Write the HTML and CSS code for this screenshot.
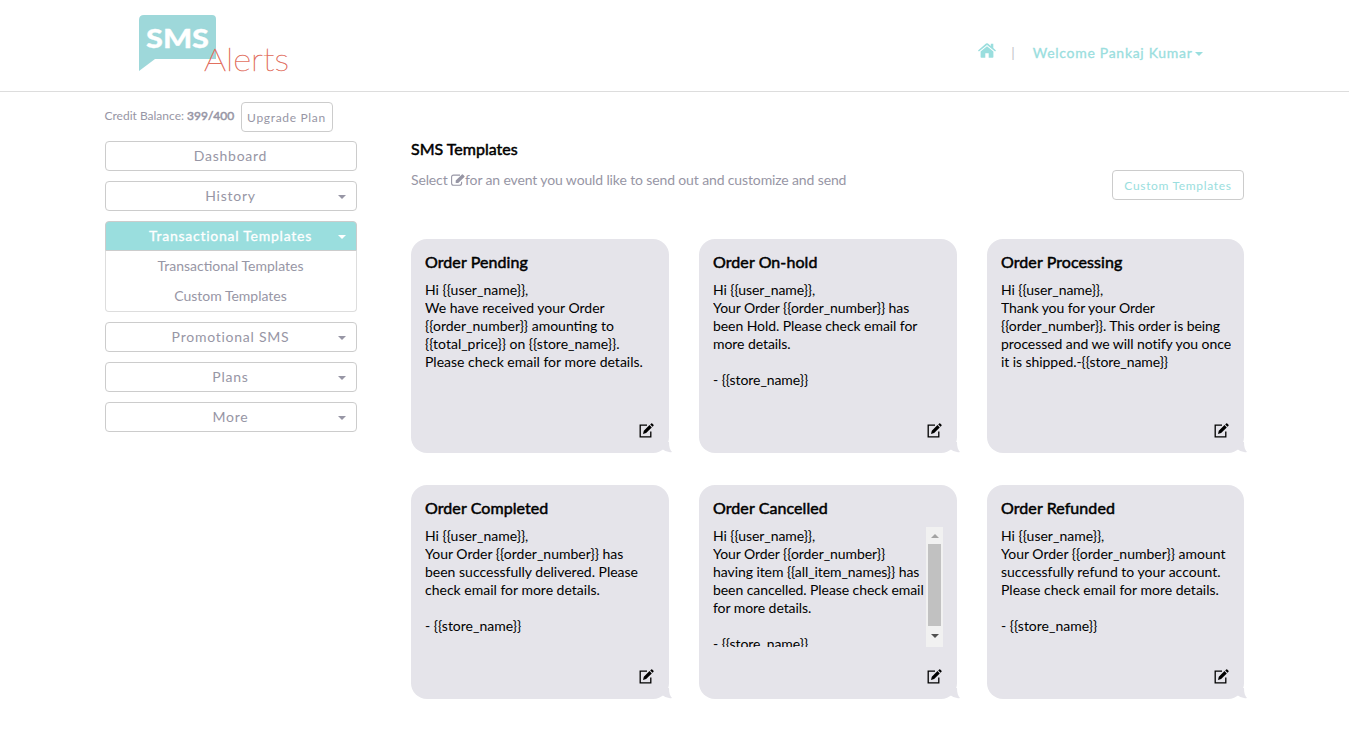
FILE: index.html
```html
<!DOCTYPE html>
<html lang="en">
<head>
<meta charset="utf-8">
<title>SMS Alerts</title>
<link rel="stylesheet" href="styles.css">
</head>
<body>
<svg class="defs" width="0" height="0" aria-hidden="true">
  <symbol id="edit" viewBox="0 0 15 15">
    <path d="M8 2.200H1.200v11.600h10.600V8.500" fill="none" stroke="#000" stroke-width="1.3"/>
    <path d="M4 11l.8-3.2 5.700-5.700 2.300 2.300-5.700 5.700z M11.200 1.400l1-1q.5-.4 1 0l1.300 1.300q.4.5 0 1l-1 1z" fill="#000"/>
  </symbol>
  <symbol id="tail" viewBox="0 0 10 11">
    <path d="M0 0H7C7 5 8 8 10 10Q5 11 0 7z" fill="#e5e4ea"/>
  </symbol>
</svg>
<header class="header">
  <div class="header-inner">
    <svg class="logo" width="152" height="62" viewBox="0 0 152 62">
      <path d="M5 0H73Q77 0 77 4V44H16L0 56V5Q0 0 5 0z" fill="#9ed8da"/>
      <text class="logo-sms" x="7" y="33" textLength="63" lengthAdjust="spacingAndGlyphs">SMS</text>
      <text class="logo-alerts" x="65" y="56" textLength="85" lengthAdjust="spacingAndGlyphs">Alerts</text>
    </svg>
    <nav class="user-nav">
      <svg class="home" width="18" height="16" viewBox="0 0 18 16"><path d="M9 3.200L15.400 8.600V14q0 .8-.8.8H10.700V10.300H7.300V14.800H3.400q-.8 0-.8-.8V8.600z M9 .2q.6 0 1 .4L12.800 3V.7h2.500v4.400L18 7.400l-.9 1.100L9 1.900.9 8.500 0 7.400 8 .6Q8.400.2 9 .2z"/></svg>
      <span class="sep">|</span>
      <span class="welcome">Welcome Pankaj Kumar</span><i class="caret"></i>
    </nav>
  </div>
</header>
<div class="container">
  <aside class="sidebar">
    <div class="credit"><span class="credit-text">Credit Balance: <b class="faux">399/400</b></span><a class="btn upgrade">Upgrade Plan</a></div>
    <a class="menu">Dashboard</a>
    <a class="menu">History<i class="caret"></i></a>
    <div class="group">
      <a class="menu active">Transactional Templates<i class="caret"></i></a>
      <div class="submenu"><a>Transactional Templates</a><a>Custom Templates</a></div>
    </div>
    <a class="menu">Promotional SMS<i class="caret"></i></a>
    <a class="menu">Plans<i class="caret"></i></a>
    <a class="menu">More<i class="caret"></i></a>
  </aside>
  <main class="main">
    <h1 class="title faux">SMS Templates</h1>
    <div class="intro">
      <p>Select <svg class="pencil" width="14" height="12" viewBox="0 0 14 12"><path d="M9 1.100H2.600Q.6 1.100.6 3v6.200q0 2 2 2h6q2 0 2-2V7.800" fill="none" stroke="#9796a5" stroke-width="1.1"/><path d="M4.700 9V6.600L10.900.5q.5-.5 1 0l1.500 1.500q.5.5 0 1L7.200 9z" fill="#9796a5"/></svg>for an event you would like to send out and customize and send</p>
      <a class="btn custom">Custom Templates</a>
    </div>
    <div class="cards">
      <section class="card"><h2 class="faux">Order Pending</h2><div class="message">Hi {{user_name}},<br>We have received your Order {{order_number}} amounting to {{total_price}} on {{store_name}}. Please check email for more details.</div><svg class="edit"><use href="#edit"/></svg><svg class="tail"><use href="#tail"/></svg></section>
      <section class="card"><h2 class="faux">Order On-hold</h2><div class="message tight">Hi {{user_name}},<br>Your Order {{order_number}} has<br>been Hold. Please check email for<br>more details.<br><br>- {{store_name}}</div><svg class="edit"><use href="#edit"/></svg><svg class="tail"><use href="#tail"/></svg></section>
      <section class="card"><h2 class="faux">Order Processing</h2><div class="message tight nowrap">Hi {{user_name}},<br>Thank you for your Order<br>{{order_number}}. This order is being<br>processed and we will notify you once<br>it is shipped.-{{store_name}}</div><svg class="edit"><use href="#edit"/></svg><svg class="tail"><use href="#tail"/></svg></section>
      <section class="card"><h2 class="faux">Order Completed</h2><div class="message">Hi {{user_name}},<br>Your Order {{order_number}} has been successfully delivered. Please check email for more details.<br><br>- {{store_name}}</div><svg class="edit"><use href="#edit"/></svg><svg class="tail"><use href="#tail"/></svg></section>
      <section class="card"><h2 class="faux">Order Cancelled</h2><div class="message tight scrolled"><div class="nowrap">Hi {{user_name}},<br>Your Order {{order_number}}<br>having item {{all_item_names}} has<br>been cancelled. Please check email<br>for more details.<br><br>- {{store_name}}</div><div class="scrollbar"><i class="up"></i><i class="thumb"></i><i class="down"></i></div></div><svg class="edit"><use href="#edit"/></svg><svg class="tail"><use href="#tail"/></svg></section>
      <section class="card"><h2 class="faux">Order Refunded</h2><div class="message">Hi {{user_name}},<br>Your Order {{order_number}} amount successfully refund to your account. Please check email for more details.<br><br>- {{store_name}}</div><svg class="edit"><use href="#edit"/></svg><svg class="tail"><use href="#tail"/></svg></section>
    </div>
  </main>
</div>
</body>
</html>
```
FILE: styles.css
```css
* { box-sizing: border-box; }
body { margin: 0; height: 734px; overflow: hidden; background: #fff; color: #9796a5; font: 14px/20px Lato, sans-serif; }
h1, h2, p { margin: 0; }
.defs { display: block; height: 0; }
.faux { font-weight: 400; -webkit-text-stroke: .5px currentColor; }
.header { height: 92px; border-bottom: 1px solid #ddd; }
.header-inner { width: 1140px; margin: 0 auto; padding: 15px 42px 0 34px; display: flex; justify-content: space-between; }
.logo { display: block; margin-left: .5px; overflow: visible; }
.logo-sms { font: 900 27px Lato, sans-serif; fill: #fff; stroke: #fff; stroke-width: .3px; }
.logo-alerts { font: 100 31px Lato, sans-serif; fill: #e2705f; stroke: #e2705f; stroke-width: .45px; }
.user-nav { display: flex; align-items: center; height: 20px; margin-top: 28px; color: #9adede; letter-spacing: 1px; }
.home { fill: #9adede; margin-top: -4px; }
.sep { margin: 0 17px 0 15px; color: #c4c4ca; }
.welcome { -webkit-text-stroke: .3px currentColor; letter-spacing: .7px; }
.caret { width: 0; height: 0; border: 4px solid transparent; border-top-color: currentColor; border-bottom: 0; }
.user-nav .caret { margin: 2px 0 0 2px; }
.container { width: 1140px; margin: 0 auto; display: flex; gap: 54.5px; }
.sidebar { width: 252px; flex: none; padding-top: 10px; display: flex; flex-direction: column; gap: 10px; }
.credit { display: flex; height: 29px; }
.credit-text { width: 136px; font-size: 12px; line-height: 28px; white-space: nowrap; }
.btn { border: 1px solid #ccc; border-radius: 4px; height: 30px; line-height: 30px; font-size: 12px; letter-spacing: .68px; text-align: center; white-space: nowrap; background: #fff; }
.upgrade { width: 92px; }
.menu { display: block; position: relative; height: 30px; border: 1px solid #ccc; border-radius: 4px; line-height: 28px; text-align: center; letter-spacing: .75px; }
.menu .caret { position: absolute; right: 10px; top: 13px; }
.active { background: #9adede; color: #fff; -webkit-text-stroke: .3px currentColor; border-radius: 4px 4px 0 0; }
.submenu { height: 61px; border: 1px solid #ddd; border-top: 0; border-radius: 0 0 4px 4px; }
.submenu a { display: block; height: 30px; line-height: 30px; text-align: center; }
.main { flex: none; width: 833px; padding-top: 47px; }
.title { color: #000; font-size: 16px; line-height: 20px; }
.intro { display: flex; justify-content: space-between; height: 80px; padding-top: 11px; }
.intro p { letter-spacing: -.13px; }
.pencil { vertical-align: -1px; }
.custom { width: 132px; color: #9adede; }
.cards { display: grid; grid-template-columns: 258px 258px 257px; grid-auto-rows: 214px; gap: 32px 30px; }
.card { position: relative; background: #e5e4ea; border-radius: 16px; padding: 13px 13px 14px 14px; color: #000; }
.card h2 { font-size: 16px; line-height: 20px; letter-spacing: .08px; }
.message { margin-top: 9px; height: 120px; line-height: 18px; overflow: hidden; }
.tight { letter-spacing: -.07px; }
.scrolled { display: flex; justify-content: space-between; margin-right: 1px; }
.nowrap { white-space: nowrap; }
.scrollbar { width: 17px; flex: none; background: #f1f1f1; display: flex; flex-direction: column; align-items: center; }
.thumb { width: 13px; height: 82px; margin: 6px 0 8px; background: #c1c1c1; }
.up { margin-top: 7px; border: 4px solid transparent; border-top: 0; border-bottom-color: #a3a3a3; }
.down { border: 4px solid transparent; border-bottom: 0; border-top-color: #505050; }
.edit { position: absolute; right: 15px; bottom: 15px; width: 15px; height: 15px; }
.tail { position: absolute; right: -3px; bottom: 0; width: 10px; height: 11px; }
```
